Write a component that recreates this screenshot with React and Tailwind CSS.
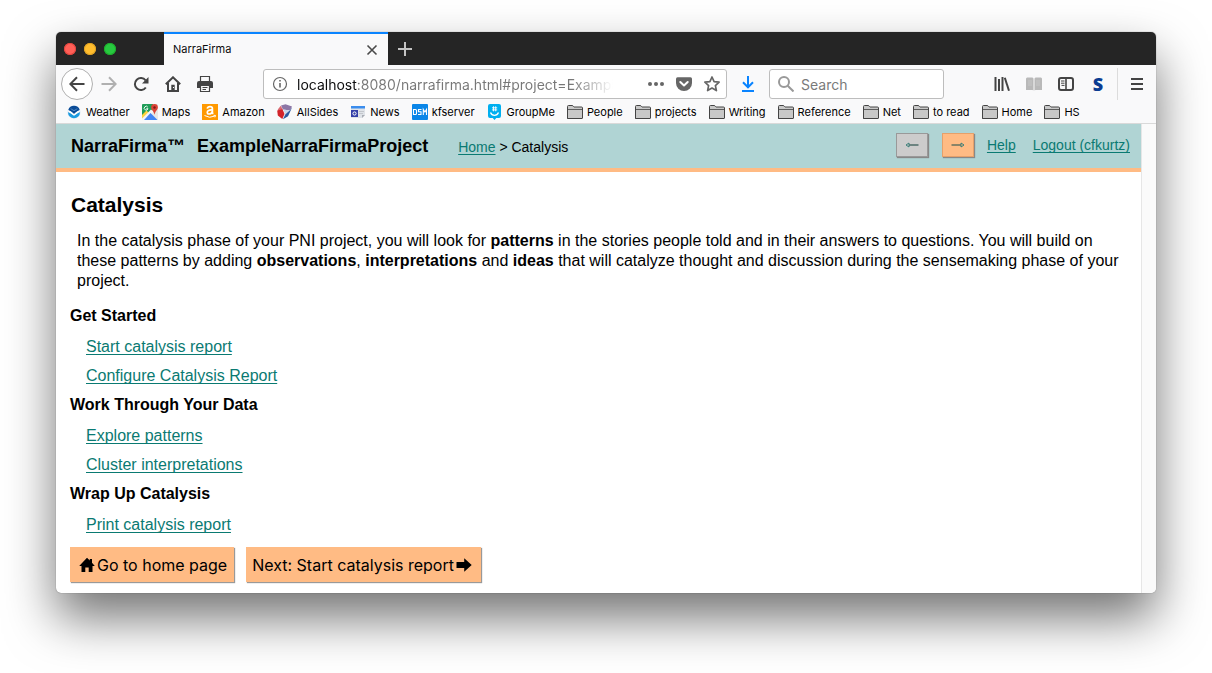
import React from "react";

const linkClass =
  "text-[#0a7a72] underline decoration-1 underline-offset-2 [text-decoration-skip-ink:none]";

function Folder() {
  return (
    <svg width="16" height="16" viewBox="0 0 16 16" fill="#c8c8c8" stroke="#444" strokeWidth="1">
      <path d="M.5 14.500v-12q0-1 1-1h3.500q1 0 1.500 1l.5.500h7.500q1 0 1 1v10q0 .500-.5.500h-14q-.5 0-.5-.5z" />
      <path d="M1 5.500h14.500" fill="none" opacity=".8" />
    </svg>
  );
}

function WeatherIcon() {
  return (
    <svg width="16" height="16" viewBox="0 0 16 16">
      <circle cx="8" cy="8" r="6.600" fill="#dbe9f5" />
      <path d="M2.300 6a6 6 0 0 1 11.400 0L10.500 8 8 10 5.500 8z" fill="#0a4b97" />
      <path d="M5 4.500q1.500 2 3 2t3-2" stroke="#5b93c9" strokeWidth="1" fill="none" />
      <path d="M2 8.200q2 .3 3.500 1.800L8 11.800l2.500-1.800Q12 8.500 14 8.200a6 6 0 0 1-12 0z" fill="#1c9be0" />
      <path d="M1.700 6.300q2.800.4 4.300 2L8 10.200l2-1.900q1.500-1.600 4.300-2-1 2.200-3.300 3.200L8 11.400 5 9.500Q2.700 8.500 1.700 6.300z" fill="#fff" />
    </svg>
  );
}

function MapsIcon() {
  return (
    <svg width="16" height="16" viewBox="0 0 16 16">
      <rect width="16" height="16" rx="1" fill="#e8e8e4" />
      <path d="M0 1q0-1 1-1h10v5L8 8l-8 7z" fill="#1f9d58" />
      <path d="M0 11l4.500-4.500 2 2L0 15z" fill="#fdd23c" />
      <path d="M0 14.500L9 5.500l2.500 2.500L3 16H1q-1 0-1-1z" fill="#f4f4f4" />
      <path d="M8.500 9l7 7H2z" fill="#4285f4" />
      <path d="M5.800 3.200A1.900 1.900 0 1 0 6 4.700H4.300" stroke="#fff" strokeWidth=".9" fill="none" />
      <path d="M12.500 0a3.400 3.400 0 0 1 3.400 3.400c0 2.500-2.600 3-3.400 7.400-.8-4.400-3.400-4.900-3.400-7.400A3.400 3.400 0 0 1 12.500 0z" fill="#db4437" />
      <circle cx="12.500" cy="3.500" r="1.200" fill="#7e1a14" />
    </svg>
  );
}

function AmazonIcon() {
  return (
    <svg width="16" height="16" viewBox="0 0 16 16">
      <rect width="16" height="16" fill="#ff9900" />
      <path d="M5.300 4.600Q5.600 2.700 8 2.700t2.400 2V8.500q0 .7.800 1.400M10.300 6Q5.300 5.700 5.300 8.300q0 1.700 1.700 1.700 2.500 0 3.300-2.600" stroke="#fff" strokeWidth="1.700" fill="none" />
      <path d="M2.500 11.500q5 3.200 10.200.6M11.500 11.300l2 .1-.6 1.900" stroke="#fff" strokeWidth="1" fill="none" />
    </svg>
  );
}

function AllSidesIcon() {
  return (
    <svg width="16" height="16" viewBox="0 0 16 16">
      <path d="M4 1.500L8.500.3 15 2.500 13 6.500 6 5.500z" fill="#8d77a6" />
      <path d="M3.700 1.800L5.800 5.600 1.500 8 .8 5.500z" fill="#cf3a44" opacity=".75" />
      <path d="M.2 6.500L5.500 5.300 7.500 10l-2.200 5L.8 11.500z" fill="#d2232a" />
      <path d="M6.300 5.600l7 1L11 12 5.800 15l2.300-5z" fill="#c9d6ea" />
      <path d="M15.300 3L11 12.300 6 15.300l2.500-5L13 6.300z" fill="#2c5aa0" />
    </svg>
  );
}

function NewsIcon() {
  return (
    <svg width="16" height="16" viewBox="0 0 16 16">
      <path d="M1 2h14v9l-3 3H1z" fill="#dfe3e8" />
      <rect x="1" y="2" width="14" height="2.500" fill="#3b8ded" />
      <rect x="1" y="6" width="7" height="7" fill="#3440a8" />
      <circle cx="4.500" cy="9.500" r="1.600" fill="none" stroke="#fff" />
      <path d="M9 7.500h5M9 9.500h4" stroke="#c3c6cc" />
      <path d="M12 14v-3h3z" fill="#a9adb5" />
    </svg>
  );
}

function DsmIcon() {
  return (
    <svg width="16" height="16" viewBox="0 0 16 16">
      <rect width="16" height="16" rx="1" fill="#0a86e8" />
      <path d="M1.500 5.500h2q1 0 1 1v3q0 1-1 1h-2zM9.500 5.500h-3v2.300h2.500v2.700H6M11.300 11V5.500l1.600 2.500 1.600-2.500V11" stroke="#fff" strokeWidth="1.100" fill="none" />
    </svg>
  );
}

function GroupMeIcon() {
  return (
    <svg width="16" height="16" viewBox="0 0 16 16">
      <path d="M3 0h9q2 0 2 2v10q0 2-2 2H9.300L7.500 16l-1.800-2H3q-2 0-2-2V2q0-2 2-2z" fill="#00aff0" />
      <path d="M6.500 2.300v5M8.700 2.300v5M5 3.800h5.200M5 5.900h5.200" stroke="#fff" strokeWidth=".9" />
      <path d="M3.500 8.500q1.200 2.800 4 2.800t4-2.800" stroke="#fff" strokeWidth="1.300" fill="none" />
    </svg>
  );
}

const bookmarks = [
  ["Weather", WeatherIcon],
  ["Maps", MapsIcon],
  ["Amazon", AmazonIcon],
  ["AllSides", AllSidesIcon],
  ["News", NewsIcon],
  ["kfserver", DsmIcon],
  ["GroupMe", GroupMeIcon],
  ["People", Folder],
  ["projects", Folder],
  ["Writing", Folder],
  ["Reference", Folder],
  ["Net", Folder],
  ["to read", Folder],
  ["Home", Folder],
  ["HS", Folder],
];

function ToolButton({ label, children, className = "" }) {
  return (
    <button
      type="button"
      aria-label={label}
      className={`flex size-8 shrink-0 items-center justify-center ${className}`}
    >
      <svg width="16" height="16" viewBox="0 0 16 16" fill="none" stroke="#444" strokeWidth="2">
        {children}
      </svg>
    </button>
  );
}

function TitleBar() {
  return (
    <div className="flex h-[33px] bg-[#252525]">
      <div className="flex w-[108px] shrink-0 items-center gap-2 pl-2">
        <button type="button" aria-label="Close window" className="size-3 rounded-full bg-[#ff5f57] ring-1 ring-[#e0443e] ring-inset" />
        <button type="button" aria-label="Minimize window" className="size-3 rounded-full bg-[#ffbd2e] ring-1 ring-[#dea123] ring-inset" />
        <button type="button" aria-label="Zoom window" className="size-3 rounded-full bg-[#28c940] ring-1 ring-[#1dad2b] ring-inset" />
      </div>
      <div className="flex w-56 items-center justify-between border-t-2 border-[#0a84ff] bg-[#f9f9fa] pr-[10px] pl-[9px] text-[11px] text-[#0c0c0d]">
        <span>NarraFirma</span>
        <button type="button" aria-label="Close tab">
          <svg width="12" height="12" viewBox="0 0 12 12" stroke="#4a4a4a" strokeWidth="1.600">
            <path d="M1.500 1.500l9 9M10.500 1.500l-9 9" />
          </svg>
        </button>
      </div>
      <button type="button" aria-label="New tab" className="flex w-[34px] items-center justify-center">
        <svg width="14" height="14" viewBox="0 0 14 14" stroke="#c4c4c4" strokeWidth="2">
          <path d="M7 0v14M0 7h14" />
        </svg>
      </button>
    </div>
  );
}

function Toolbar() {
  return (
    <div className="flex h-[38px] items-center bg-[#f9f9fa] pr-[3px] pl-[5px]">
      <ToolButton label="Back" className="rounded-full border border-[#b0b0b0] bg-white">
        <path d="M15.500 8H1.500M8 1.300L1.300 8 8 14.700" />
      </ToolButton>
      <ToolButton label="Forward" className="opacity-40">
        <path d="M.5 8h14M8 1.300L14.700 8 8 14.700" />
      </ToolButton>
      <ToolButton label="Reload">
        <path d="M12.800 11.500A6 6 0 1 1 12.600 4.300" />
        <path d="M15.500 1v6.500H9z" fill="#444" stroke="none" />
      </ToolButton>
      <ToolButton label="Home">
        <path d="M.8 8.300L8 1.300l7.200 7" />
        <path d="M3 7v8h10V7" />
        <path d="M6.300 15V8.800h3.400V15z" fill="#444" stroke="none" />
        <path d="M8.500 11v1" stroke="#fff" strokeWidth="1" />
      </ToolButton>
      <ToolButton label="Print">
        <path d="M3.500 5V.5h9V5" strokeWidth="1.200" />
        <path d="M2 5h12q2 0 2 2v5h-3V9.500H3V12H0V7q0-2 2-2z" fill="#444" stroke="none" />
        <path d="M3.500 9.500h9v6h-9z" strokeWidth="1.200" />
        <path d="M5.500 11.500h5M5.500 13.500h3.500" strokeWidth="1" />
      </ToolButton>

      <div className="ml-[42px] flex h-[30px] min-w-0 flex-1 items-center rounded-[3px] border border-[#bdbdbd] bg-white pr-[6px] pl-2">
        <svg width="16" height="16" viewBox="0 0 16 16" className="shrink-0" fill="none" stroke="#666">
          <circle cx="8" cy="8" r="6.500" strokeWidth="1.200" />
          <path d="M8 7v4.500M8 4v1.600" strokeWidth="1.600" />
        </svg>
        <input
          aria-label="Address"
          readOnly
          value="localhost:8080/narrafirma.html#project=ExampleNarraFirmaProject"
          className="ml-[9px] min-w-0 flex-1 bg-[linear-gradient(90deg,#0c0c0d_60px,#777_60px,#777_275px,transparent_316px)] bg-clip-text text-[14px] text-transparent outline-none"
        />
        <div className="ml-[26px] flex shrink-0 items-center gap-3">
          <button type="button" aria-label="Page actions">
            <svg width="16" height="16" viewBox="0 0 16 16" fill="#666">
              <circle cx="2" cy="8" r="2" />
              <circle cx="8" cy="8" r="2" />
              <circle cx="14" cy="8" r="2" />
            </svg>
          </button>
          <button type="button" aria-label="Save to Pocket">
            <svg width="16" height="16" viewBox="0 0 16 16">
              <path d="M1.500 1.200h13q1.500 0 1.500 1.500V7a8 8 0 0 1-16 0V2.700q0-1.500 1.500-1.500z" fill="#666" />
              <path d="M4.300 6L8 9.500 11.700 6" stroke="#fff" strokeWidth="2" strokeLinecap="round" strokeLinejoin="round" fill="none" />
            </svg>
          </button>
          <button type="button" aria-label="Bookmark this page">
            <svg width="16" height="16" viewBox="0 0 16 16" fill="none" stroke="#666" strokeWidth="1.700" strokeLinejoin="round">
              <path d="M8 1l2.100 4.600 5 .6-3.700 3.400 1 5L8 12.100l-4.400 2.500 1-5L.9 6.200l5-.6z" />
            </svg>
          </button>
        </div>
      </div>

      <button type="button" aria-label="Downloads" className="ml-[5px] flex size-8 shrink-0 items-center justify-center">
        <svg width="16" height="16" viewBox="0 0 16 16" fill="none" stroke="#0a84ff" strokeWidth="2">
          <path d="M8 0v11M3 6.300l5 5 5-5M2 15h12" />
        </svg>
      </button>
      <div className="ml-[5px] flex h-[30px] w-[175px] shrink-0 items-center gap-[7px] rounded-[3px] border border-[#bdbdbd] bg-white px-2">
        <svg width="16" height="16" viewBox="0 0 16 16" className="shrink-0" fill="none" stroke="#999" strokeWidth="2">
          <circle cx="6" cy="6" r="5" />
          <path d="M9.700 9.700l5.800 5.800" />
        </svg>
        <input
          type="search"
          aria-label="Search"
          placeholder="Search"
          className="w-full min-w-0 bg-transparent text-[14px] outline-none placeholder:text-[#7a7a7a]"
        />
      </div>

      <div className="ml-[42px] flex shrink-0 items-center">
        <ToolButton label="Library">
          <path d="M1.500 1v14M5 3v12M8.500 1v14" strokeWidth="2" />
          <path d="M10.800 1.800l4.200 13" strokeWidth="2" />
        </ToolButton>
        <ToolButton label="Reader view">
          <path d="M0 2.500l1-1h5.500l1 1v12l-1-.5H0zM8.500 2.500l1-1H15l1 1V14H9.500l-1 .5z" fill="#b9b9b9" stroke="none" />
          <path d="M2 5h4M2 7h4M2 9h4M10 5h4M10 7h4M10 9h4" stroke="#d0d0d0" strokeWidth=".6" />
        </ToolButton>
        <ToolButton label="Sidebars">
          <rect x="1" y="2" width="14" height="12" rx="2" strokeWidth="2" />
          <path d="M8 2v12" strokeWidth="1.600" />
          <path d="M3 5h3.500M3 7.200h3.500M3.500 9.400h3" strokeWidth="1" />
        </ToolButton>
        <button type="button" aria-label="Extension" className="size-8 font-['Open_Sans',sans-serif] text-[18px] leading-none font-extrabold text-[#0b3c91]">
          S
        </button>
        <div className="ml-[3px] h-8 w-px bg-[#dcdcdc]" />
        <ToolButton label="Open menu" className="ml-[3px]">
          <path d="M2 3h12M2 8h12M2 13h12" />
        </ToolButton>
      </div>
    </div>
  );
}

function BookmarksBar() {
  return (
    <nav aria-label="Bookmarks" className="flex h-[21px] gap-3 border-b border-[#d9d9d9] bg-[#f9f9fa] pt-px pl-[10px] text-[11px] leading-4 text-black">
      {bookmarks.map(([name, Icon]) => (
        <a key={name} href="#" className="flex shrink-0 gap-1 whitespace-nowrap">
          <Icon />
          {name}
        </a>
      ))}
    </nav>
  );
}

function SiteHeader() {
  return (
    <header className="flex h-12 items-start border-b-4 border-[#ffbb84] bg-[#b0d4d4] pr-[11px] pl-[15px] text-[14px] leading-5">
      <div className="flex gap-3 pt-3 text-[18px] font-bold">
        <span>NarraFirma™</span>
        <span>ExampleNarraFirmaProject</span>
      </div>
      <div className="ml-[30px] pt-[13px]">
        <a href="#" className={linkClass}>Home</a> &gt; Catalysis
      </div>
      <div className="ml-auto flex pt-[9px]">
        <button type="button" aria-label="Previous page" className="mr-[14px] flex h-6 w-8 items-center justify-center border border-[#999] bg-[#ccc] shadow-[1px_1px_1px_#888]">
          <svg width="14" height="6" viewBox="0 0 14 6" fill="none" stroke="#3b7e78" strokeWidth="1">
            <path d="M4 3h9.500" stroke="#6c8481" strokeWidth="2" />
            <path d="M4 1L1 3l3 2z" />
          </svg>
        </button>
        <button type="button" aria-label="Next page" className="mr-[13px] flex h-6 w-8 items-center justify-center border border-[#e5a06a] bg-[#ffbb84] shadow-[1px_1px_1px_#888]">
          <svg width="14" height="6" viewBox="0 0 14 6" fill="none" stroke="#3b7e78" strokeWidth="1">
            <path d="M.5 3H10" stroke="#8b8468" strokeWidth="2" />
            <path d="M10 1l3 2-3 2z" />
          </svg>
        </button>
        <div className="flex gap-[17px] pt-[2px]">
          <a href="#" className={linkClass}>Help</a>
          <a href="#" className={linkClass}>Logout (cfkurtz)</a>
        </div>
      </div>
    </header>
  );
}

const sections = [
  ["Get Started", ["Start catalysis report", "Configure Catalysis Report"]],
  ["Work Through Your Data", ["Explore patterns", "Cluster interpretations"]],
  ["Wrap Up Catalysis", ["Print catalysis report"]],
];

const buttonClass =
  "flex h-[35px] items-center gap-[2px] bg-[#ffbb84] font-[Inter,sans-serif] text-[16px] text-black shadow-[1px_1px_1px_#999]";

function Page() {
  return (
    <main className="pr-4 pb-[11px] pl-[14px] text-[16px]">
      <h1 className="pt-5 pl-px text-[21px] leading-[26px] font-bold">Catalysis</h1>
      <p className="mt-[13px] pl-[7px] leading-5">
        In the catalysis phase of your PNI project, you will look for <b>patterns</b> in the stories people told and
        in their answers to questions. You will build on these patterns by adding <b>observations</b>,{" "}
        <b>interpretations</b> and <b>ideas</b> that will catalyze thought and discussion during the sensemaking phase
        of your project.
      </p>
      <div className="mt-[10px]">
        {sections.map(([title, links]) => (
          <section key={title}>
            <h2 className="mb-[2px] leading-[29px] font-bold">{title}</h2>
            <ul className="pl-4">
              {links.map((text) => (
                <li key={text} className="leading-[29px]">
                  <a href="#" className={linkClass}>{text}</a>
                </li>
              ))}
            </ul>
          </section>
        ))}
      </div>
      <div className="mt-2 flex gap-3">
        <button type="button" className={`${buttonClass} pr-[7px] pl-[9px]`}>
          <svg width="16" height="16" viewBox="0 0 16 16">
            <path d="M8 .8l2.800 2.800V2h2.200v3.800L15.800 9H13.500v6H9.700v-4.500H6.300V15H2.500V9H.2z" />
          </svg>
          Go to home page
        </button>
        <button type="button" className={`${buttonClass} pr-[9px] pl-[6px]`}>
          Next: Start catalysis report
          <svg width="16" height="16" viewBox="0 0 16 16">
            <path d="M.5 5h7.700V1.200L15.700 8l-7.500 6.800V11H.5z" />
          </svg>
        </button>
      </div>
    </main>
  );
}

export default function App() {
  return (
    <div className="min-h-screen overflow-hidden bg-white px-14 pt-8 pb-20 font-[Inter,sans-serif]">
      <div className="overflow-hidden rounded-[5px] bg-white shadow-[0_0_1px_rgba(0,0,0,0.6),0_25px_50px_rgba(0,0,0,0.55)]">
        <TitleBar />
        <Toolbar />
        <BookmarksBar />
        <div className="flex font-['Liberation_Sans',Arial,sans-serif] text-black">
          <div className="min-w-0 flex-1">
            <SiteHeader />
            <Page />
          </div>
          <div className="w-[15px] shrink-0 border-l border-[#e6e6e6] bg-[#fafafa]" />
        </div>
      </div>
    </div>
  );
}
